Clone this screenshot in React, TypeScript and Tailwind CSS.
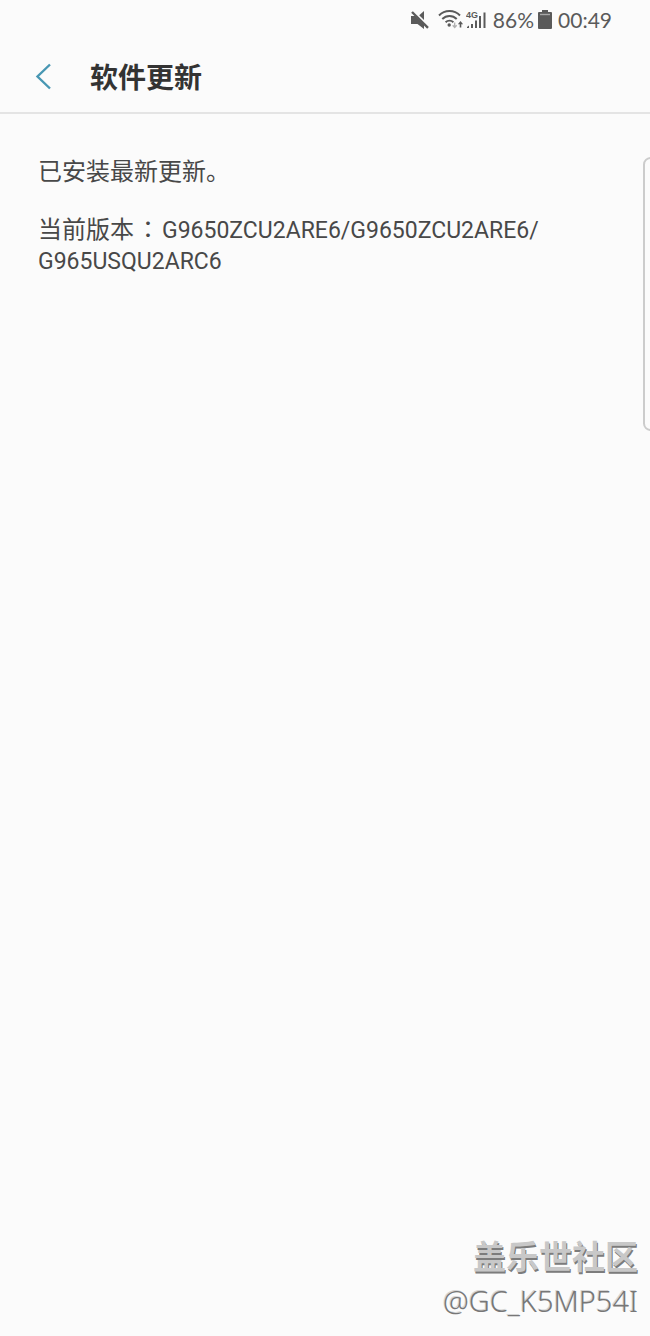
import React from "react";

const MuteIcon = () => (
  <svg width="20" height="20" viewBox="0 0 20 20" fill="#5a5a5a" aria-hidden="true">
    <path d="M1 6h4.2L14 14.4V19l-6.5-5H1z" />
    <path d="M9.2 5.2 14 1v9z" />
    <path d="M2 2 18 17.8" stroke="#5a5a5a" strokeWidth="2.4" />
  </svg>
);

const WifiIcon = () => (
  <svg width="26" height="20" viewBox="0 0 26 20" fill="none" aria-hidden="true">
    <g stroke="#5a5a5a" strokeWidth="1.9">
      <path d="M1 5.5a14.5 14.5 0 0 1 21 0" />
      <path d="M4.3 9a10 10 0 0 1 14.4 0" />
      <path d="M7.6 12.2a5.6 5.6 0 0 1 7.8 0" />
    </g>
    <circle cx="11.2" cy="15" r="1.7" fill="#5a5a5a" />
    <path d="M16.7 12.5v5M14.7 15.2l2 2.3 2-2.3" stroke="#b0b0b0" strokeWidth="1.3" />
    <path d="M22.5 17.5v-4" stroke="#5a5a5a" strokeWidth="1.6" />
    <path d="M19.9 14.2 22.5 11l2.6 3.2z" fill="#5a5a5a" />
  </svg>
);

const SignalIcon = () => (
  <svg width="21" height="20" viewBox="0 0 21 20" fill="#5a5a5a" aria-hidden="true">
    <text x="0" y="8" fontSize="9" fontWeight="700" fontFamily="Liberation Sans, sans-serif">
      4G
    </text>
    <path d="M1 18v-1l2-1.5V18z" />
    <path d="M5 14h2v4H5zM9 10.5h2V18H9zM13 6h2v12h-2zM17.5 2.5h2V18h-2z" />
  </svg>
);

const BatteryIcon = () => (
  <svg width="14" height="20" viewBox="0 0 14 20" fill="#5a5a5a" aria-hidden="true">
    <path d="M4 0h6v2h3a1 1 0 0 1 1 1v15a1 1 0 0 1-1 1H1a1 1 0 0 1-1-1V3a1 1 0 0 1 1-1h3z" />
    <path d="M2 4.5h10" stroke="#a8a8a8" strokeWidth="1.4" />
  </svg>
);

const StatusBar = () => (
  <div className="flex h-10 items-center justify-end pr-[38px] font-[Lato,sans-serif] text-[21px] leading-6 text-[#5a5a5a]">
    <MuteIcon />
    <span className="ml-2 flex">
      <WifiIcon />
    </span>
    <span className="ml-0.5 flex">
      <SignalIcon />
    </span>
    <span className="ml-1.5">86%</span>
    <span className="mr-1.5 ml-1 flex">
      <BatteryIcon />
    </span>
    <time>00:49</time>
  </div>
);

const Header = () => (
  <header className="flex h-[74px] items-center border-b-2 border-[#e4e4e4] pl-8">
    <button type="button" aria-label="返回" className="flex w-[58px] items-center">
      <svg width="22" height="28" viewBox="0 0 22 28" fill="none" aria-hidden="true">
        <path d="M18 2.5 5.5 14.5 18 26.5" stroke="#4897b3" strokeWidth="2.4" />
      </svg>
    </button>
    <h1 className="font-['Noto_Sans_CJK_SC',sans-serif] text-[28px] leading-8 font-bold text-[#333333]">
      软件更新
    </h1>
  </header>
);

const App = () => {
  return (
    <div className="relative flex min-h-screen flex-col overflow-hidden bg-[#fbfbfb] font-[Roboto,'Noto_Sans_CJK_SC',sans-serif]">
      <StatusBar />
      <Header />
      <main className="px-[38px] pt-[43px] text-2xl leading-[30px] text-[#484848]">
        <p>已安装最新更新。</p>
        <p className="mt-7">
          当前版本
          <span className="mx-0.5 font-[Roboto,'Noto_Sans_CJK_TC',sans-serif]">：</span>
          <span className="text-[23px]">
            G9650ZCU2ARE6/<wbr />G9650ZCU2ARE6/<wbr />G965USQU2ARC6
          </span>
        </p>
      </main>
      <div className="absolute top-[157px] -right-2 h-[274px] w-[15px] rounded-lg border-2 border-[#cccccc] bg-[#fbfbfb]" />
      <footer className="mt-auto flex flex-col items-end pr-3 pb-3">
        <p className="font-['Noto_Sans_CJK_SC',sans-serif] text-[33px] leading-[46px] font-bold text-[#c8c8c8] [text-shadow:1px_2px_0_#7c7c7c]">
          盖乐世社区
        </p>
        <p className="font-['Noto_Sans',sans-serif] text-[29px] leading-[46px] font-light text-[#777777] [text-shadow:-1px_-1px_0_#d6d6d6]">
          @GC_K5MP54I
        </p>
      </footer>
    </div>
  );
};

export default App;
